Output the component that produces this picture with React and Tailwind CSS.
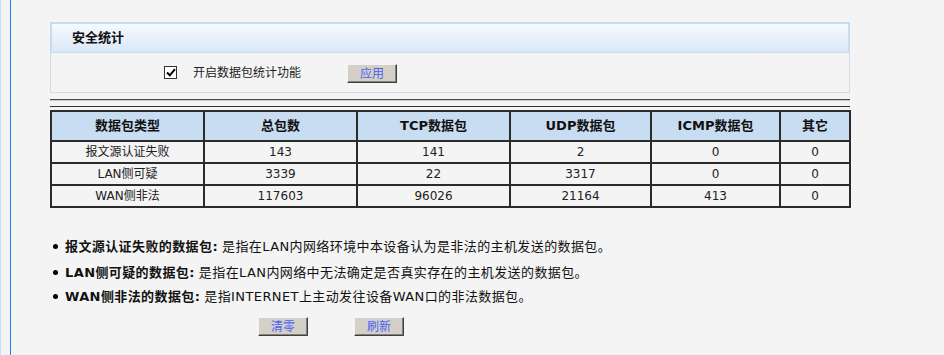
const rows = [
  { name: '报文源认证失败', total: 143, tcp: 141, udp: 2, icmp: 0, other: 0 },
  { name: 'LAN侧可疑', total: 3339, tcp: 22, udp: 3317, icmp: 0, other: 0 },
  { name: 'WAN侧非法', total: 117603, tcp: 96026, udp: 21164, icmp: 413, other: 0 },
];

const notes = [
  { term: '报文源认证失败的数据包:', desc: '是指在LAN内网络环境中本设备认为是非法的主机发送的数据包。', cls: 'h-[27px]' },
  { term: 'LAN侧可疑的数据包:', desc: '是指在LAN内网络中无法确定是否真实存在的主机发送的数据包。', cls: 'h-[25px]' },
  { term: 'WAN侧非法的数据包:', desc: '是指INTERNET上主动发往设备WAN口的非法数据包。', cls: 'h-[23px]' },
];

const OldButton = ({ children }) => (
  <button className="w-[50px] h-[19px] bg-[#d4d0c8] border border-t-[#f4f4f4] border-l-[#f4f4f4] border-r-[#404040] border-b-[#404040] shadow-[inset_-1px_-1px_0_#808080] text-[12px] leading-none text-[#4a62f2]">
    {children}
  </button>
);

const Check = () => (
  <span className="w-[13px] h-[13px] bg-white border border-[#333] flex items-center justify-center">
    <svg width="10" height="9" viewBox="0 0 10 9">
      <path d="M1 4.5 L3.8 7.3 L9 1.2" fill="none" stroke="#000" strokeWidth="2" />
    </svg>
  </span>
);

const th = 'bg-[#c8ddf1] border-2 border-[#2b2b2b] text-[13px] font-bold text-[#111] h-[30px] text-center';
const td = 'border-2 border-[#2b2b2b] text-[12px] text-[#222] h-[22px] text-center';

export default function App() {
  return (
    <div className="min-h-[355px] bg-[#f4f4f4] flex font-['DejaVu_Sans','Noto_Sans_CJK_SC',sans-serif]">
      <div className="w-[10px] border-l border-[#bfe5f4]" />
      <div className="w-px bg-[#1a7ef5]" />
      <div className="pl-[39px] pt-[22px]">
        {/* 安全统计 panel */}
        <div className="w-[800px]">
          <div className="h-[31px] border-2 border-b border-[#c6dcf1] bg-gradient-to-b from-[#f6f9ff] to-[#dbe8f8] flex items-center pl-[20px]">
            <span className="text-[13px] font-bold text-[#111]">安全统计</span>
          </div>
          <div className="h-[40px] border border-t-0 border-[#d1dde8] flex items-center">
            <div className="ml-[113px]"><Check /></div>
            <span className="ml-[16px] text-[12px] text-[#222]">开启数据包统计功能</span>
            <div className="ml-[46px]"><OldButton>应用</OldButton></div>
          </div>
        </div>

        <div className="w-[800px] mt-[6px] border-t border-[#4a4a4a] h-[2px] bg-[#cfc6bd]" />

        {/* stats table */}
        <div className="w-[800px] mt-[5px] border-t border-[#333] pt-[3px]">
          <table className="border-collapse w-[799px] table-fixed">
            <colgroup>
              <col className="w-[153px]" />
              <col className="w-[153px]" />
              <col className="w-[153px]" />
              <col className="w-[141px]" />
              <col className="w-[129px]" />
              <col className="w-[70px]" />
            </colgroup>
            <thead>
              <tr>
                <th className={th}>数据包类型</th>
                <th className={th}>总包数</th>
                <th className={th}>TCP数据包</th>
                <th className={th}>UDP数据包</th>
                <th className={th}>ICMP数据包</th>
                <th className={th}>其它</th>
              </tr>
            </thead>
            <tbody>
              {rows.map((r) => (
                <tr key={r.name}>
                  <td className={td}>{r.name}</td>
                  <td className={td}>{r.total}</td>
                  <td className={td}>{r.tcp}</td>
                  <td className={td}>{r.udp}</td>
                  <td className={td}>{r.icmp}</td>
                  <td className={td}>{r.other}</td>
                </tr>
              ))}
            </tbody>
          </table>
        </div>

        {/* notes */}
        <ul className="mt-[25px] ml-[3px]">
          {notes.map((n) => (
            <li key={n.term} className={`flex items-center text-[13px] text-[#111] tracking-[0.4px] ${n.cls}`}>
              <span className="w-[5px] h-[5px] rounded-full bg-black mr-[7px]" />
              <b className="font-bold">{n.term}</b>
              <span className="ml-[4px]">{n.desc}</span>
            </li>
          ))}
        </ul>

        <div className="flex gap-[46px] ml-[208px] mt-[9px]">
          <OldButton>清零</OldButton>
          <OldButton>刷新</OldButton>
        </div>
      </div>
    </div>
  );
}
